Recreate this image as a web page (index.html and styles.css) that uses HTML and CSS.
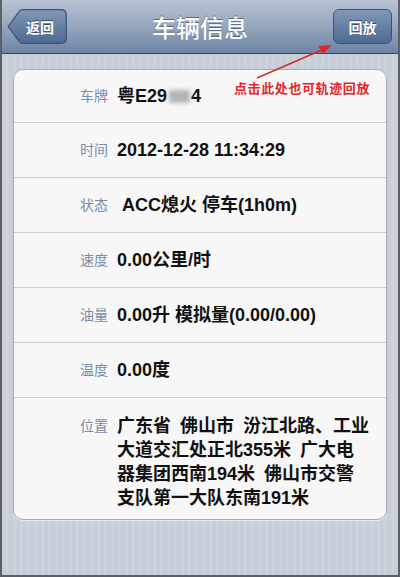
FILE: index.html
```html
<html>
<head>
<meta charset="utf-8">
<title>车辆信息</title>
<link rel="stylesheet" href="styles.css">
</head>
<body>
<div class="screen">
	<div class="navbar">
		<a class="btnBack">
			<svg class="btnShape" width="60" height="35" viewBox="0 0 60 35">
				<defs>
					<linearGradient id="bb" x1="0" y1="0" x2="0" y2="1">
						<stop offset="0" stop-color="#8399b6"/>
						<stop offset="0.5" stop-color="#6580a4"/>
						<stop offset="1" stop-color="#4d6a93"/>
					</linearGradient>
				</defs>
				<path d="M1.2 17.5 L12.5 2.2 Q13.6 0.7 15.5 0.7 H54 Q59.3 0.7 59.3 6 V29 Q59.3 34.3 54 34.3 H15.5 Q13.6 34.3 12.5 32.8 Z" fill="url(#bb)" stroke="#3d5273" stroke-width="1.2"/>
			</svg>
			<span>返回</span>
		</a>
		<div class="title">车辆信息</div>
		<a class="btn">回放</a>
	</div>

	<div class="content">
		<div class="card">
			<div class="row first">
				<span class="label">车牌</span>
				<span class="value">粤E29<span class="mask"></span>4</span>
			</div>
			<div class="row">
				<span class="label">时间</span>
				<span class="value">2012-12-28 11:34:29</span>
			</div>
			<div class="row">
				<span class="label">状态</span>
				<span class="value">&nbsp;ACC熄火 停车(1h0m)</span>
			</div>
			<div class="row">
				<span class="label">速度</span>
				<span class="value">0.00公里/时</span>
			</div>
			<div class="row">
				<span class="label">油量</span>
				<span class="value">0.00升 模拟量(0.00/0.00)</span>
			</div>
			<div class="row">
				<span class="label">温度</span>
				<span class="value">0.00度</span>
			</div>
			<div class="row address">
				<span class="label">位置</span>
				<span class="value">广东省 佛山市 汾江北路、工业<br>大道交汇处正北355米 广大电<br>器集团西南194米 佛山市交警<br>支队第一大队东南191米</span>
			</div>
		</div>
	</div>

	<!-- annotation drawn over the screenshot -->
	<div class="note">点击此处也可轨迹回放</div>
	<svg class="arrow" width="400" height="100" viewBox="0 0 400 100">
		<line x1="257" y1="78" x2="324" y2="49" stroke="#d8282a" stroke-width="1.4"/>
		<path d="M332 45 L318 46 L323 54 Z" fill="#d8282a"/>
	</svg>
</div>
</body>
</html>
```

FILE: styles.css
```css
body
{
	margin:0px;
	font-family:"Liberation Sans","Noto Sans CJK SC",sans-serif;
}
.screen
{
	position:relative;
	width:396px;
	height:575px;
	border:2px solid #5b5f66;
	border-top:0px;
	display:flex;
	flex-direction:column;
	background:repeating-linear-gradient(90deg,#c7ced8 0px,#c7ced8 4px,#cdd3dc 4px,#cdd3dc 7px);
}
.navbar
{
	height:53px;
	display:flex;
	align-items:center;
	padding:0px 6px 0px 5px;
	background:linear-gradient(#b8c3d3,#95a6bd 50%,#6d84a3);
	border-bottom:1px solid #34445c;
}
.btnBack, .btn
{
	position:relative;
	height:35px;
	display:flex;
	align-items:center;
	justify-content:center;
	color:#ffffff;
	font-size:14px;
	font-weight:bold;
	text-shadow:0px -1px 0px rgba(0,0,0,0.45);
	box-sizing:border-box;
}
.btnBack
{
	width:60px;
	padding-left:6px;
}
.btnShape
{
	position:absolute;
	left:0px;
	top:0px;
}
.btnBack span
{
	position:relative;
}
.btn
{
	width:59px;
	border:1px solid #3d5273;
	border-radius:6px;
	background:linear-gradient(#8399b6,#6580a4 50%,#4d6a93);
}
.title
{
	flex:1;
	text-align:center;
	color:#ffffff;
	font-size:24px;
	font-weight:500;
	text-shadow:0px -1px 0px rgba(40,55,80,0.6);
}
.content
{
	padding:15px 11px 0px 11px;
}
.card
{
	background:#f7f7f7;
	border:1px solid #a4abb6;
	border-radius:10px;
	box-shadow:0px 1px 0px #e8ebf0;
}
.row
{
	display:grid;
	grid-template-columns:94px 1fr;
	column-gap:9px;
	align-items:center;
	height:54px;
	border-top:1px solid #cfcfd1;
}
.row.first
{
	height:52px;
	border-top:0px;
}
.row.address
{
	height:auto;
	align-items:start;
	padding:16px 0px 9px 0px;
}
.label
{
	text-align:right;
	font-size:14px;
	color:#7a8cab;
	line-height:24px;
}
.value
{
	font-size:18px;
	font-weight:bold;
	color:#111111;
	line-height:24px;
}
.address .value
{
	word-spacing:4px;
}
.mask
{
	display:inline-block;
	width:21px;
	height:13px;
	margin:0px 1px 0px 2px;
	background:#b4b4b4;
	filter:blur(2px);
	vertical-align:-1px;
}
.note
{
	position:absolute;
	left:232px;
	top:81px;
	color:#e2262b;
	font-size:13px;
	font-weight:bold;
	letter-spacing:0.6px;
	line-height:16px;
}
.arrow
{
	position:absolute;
	left:-2px;
	top:0px;
}
```
